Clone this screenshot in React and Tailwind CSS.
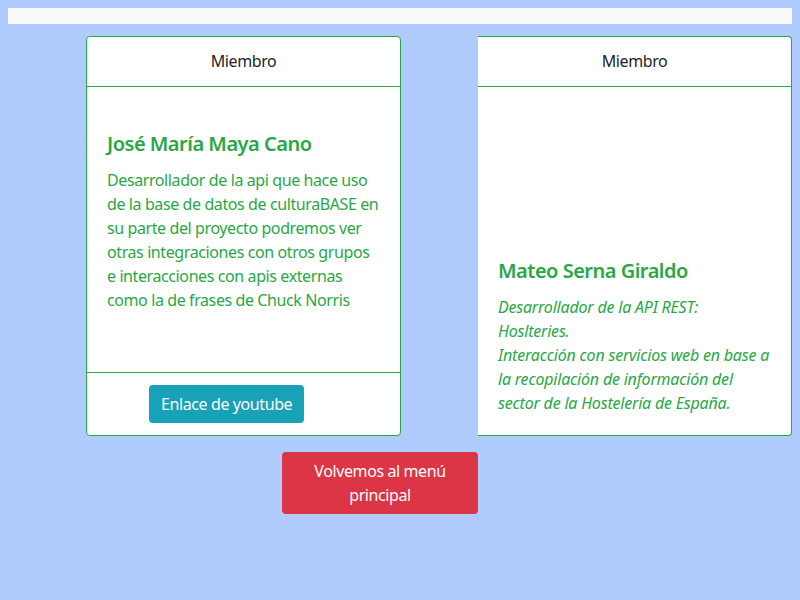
function CardHeader() {
  return (
    <div className="flex h-[50px] items-center justify-center border-b border-[#28a745] pb-px text-base text-[#212529]">
      Miembro
    </div>
  )
}

export default function App() {
  return (
    <div className="min-h-screen bg-[#b0cbfe] p-2 font-['Noto_Sans',sans-serif] text-base leading-6 tracking-[-0.4px]">
      <div className="h-4 bg-[#f8f9fa]" />

      <div className="mt-3 flex">
        <div className="ml-[78px] flex h-[400px] w-[315px] flex-col rounded border border-[#28a745] bg-white">
          <CardHeader />
          <div className="flex-1 px-5 pt-[45px] text-[#28a745]">
            <h5 className="mb-3 text-xl font-semibold leading-6 tracking-[-0.5px]">
              José María Maya Cano
            </h5>
            <p>
              Desarrollador de la api que hace uso de la base de datos de culturaBASE en su parte
              del proyecto podremos ver otras integraciones con otros grupos e interacciones con
              apis externas como la de frases de Chuck Norris
            </p>
          </div>
          <div className="border-t border-[#28a745] px-5 py-3">
            <a className="ml-[42px] inline-block rounded bg-[#17a2b8] px-3 py-[7px] text-white">
              Enlace de youtube
            </a>
          </div>
        </div>

        <div className="ml-[77px] flex h-[400px] w-[314px] flex-col rounded-r border border-l-0 border-[#28a745] bg-white">
          <CardHeader />
          <div className="flex flex-1 flex-col justify-end p-5 text-[#28a745]">
            <h5 className="mb-3 text-xl font-semibold leading-6 tracking-[-0.5px]">
              Mateo Serna Giraldo
            </h5>
            <p className="italic tracking-[-0.2px]">
              Desarrollador de la API REST: Hoslteries.
              <br />
              Interacción con servicios web en base a la recopilación de información del sector
              de la Hostelería de España.
            </p>
          </div>
        </div>
      </div>

      <button className="ml-[274px] mt-4 w-[196px] rounded bg-[#dc3545] px-3 py-[7px] text-center text-white">
        Volvemos al menú principal
      </button>
    </div>
  )
}
